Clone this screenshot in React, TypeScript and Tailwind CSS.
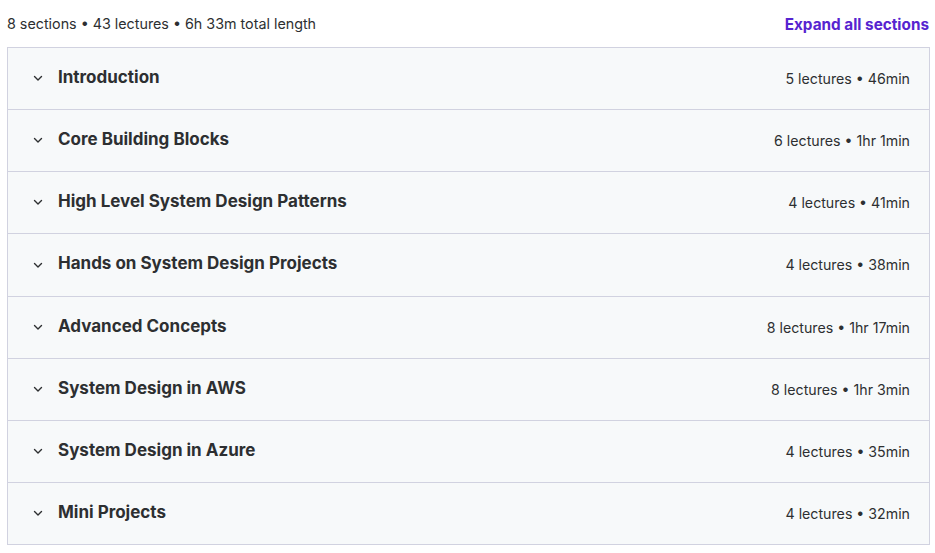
import React from 'react';

type Seccion = { titulo: string; meta: string };

const secciones: Seccion[] = [
  { titulo: 'Introduction', meta: '5 lectures • 46min' },
  { titulo: 'Core Building Blocks', meta: '6 lectures • 1hr 1min' },
  { titulo: 'High Level System Design Patterns', meta: '4 lectures • 41min' },
  { titulo: 'Hands on System Design Projects', meta: '4 lectures • 38min' },
  { titulo: 'Advanced Concepts', meta: '8 lectures • 1hr 17min' },
  { titulo: 'System Design in AWS', meta: '8 lectures • 1hr 3min' },
  { titulo: 'System Design in Azure', meta: '4 lectures • 35min' },
  { titulo: 'Mini Projects', meta: '4 lectures • 32min' },
];

function Chevron() {
  return (
    <svg width="12" height="12" viewBox="0 0 12 12" fill="none" stroke="currentColor" strokeWidth="1.4" strokeLinecap="round" strokeLinejoin="round">
      <path d="M2.5 4.5L6 8l3.5-3.5" />
    </svg>
  );
}

// alturas de fila: el curriculum real no cae en píxeles enteros
const altoFila = (i: number) =>
  i === secciones.length - 1 ? 'h-[61px]' : i === 3 ? 'h-[63px] border-b border-[#d1d2e0]' : 'h-[62px] border-b border-[#d1d2e0]';

export default function App() {
  return (
    <div
      className="w-[935px] h-[553px] bg-white pl-[7px] pr-[5px] text-[#2d2f31]"
      style={{ fontFamily: 'Inter, "Noto Sans", sans-serif' }}
    >
      <div className="h-[47px] flex items-center justify-between pt-[1px]">
        <span className="text-[14.3px]">8 sections • 43 lectures • 6h 33m total length</span>
        <button className="text-[15.3px] font-bold text-[#5624d0] mr-[1px] mt-[2px]">Expand all sections</button>
      </div>
      <div className="border border-[#d1d2e0]">
        {secciones.map((s, i) => (
          <div
            key={s.titulo}
            className={`bg-[#f7f9fa] flex items-center pl-[24px] pr-[19px] pb-[2px] ${altoFila(i)}`}
          >
            <span className="w-[26px] flex items-center text-[#2d2f31] mt-[1px]">
              <Chevron />
            </span>
            <span className="flex-1 text-[17px] font-bold leading-tight">{s.titulo}</span>
            <span className="text-[14.2px] mt-[2px]">{s.meta}</span>
          </div>
        ))}
      </div>
    </div>
  );
}
